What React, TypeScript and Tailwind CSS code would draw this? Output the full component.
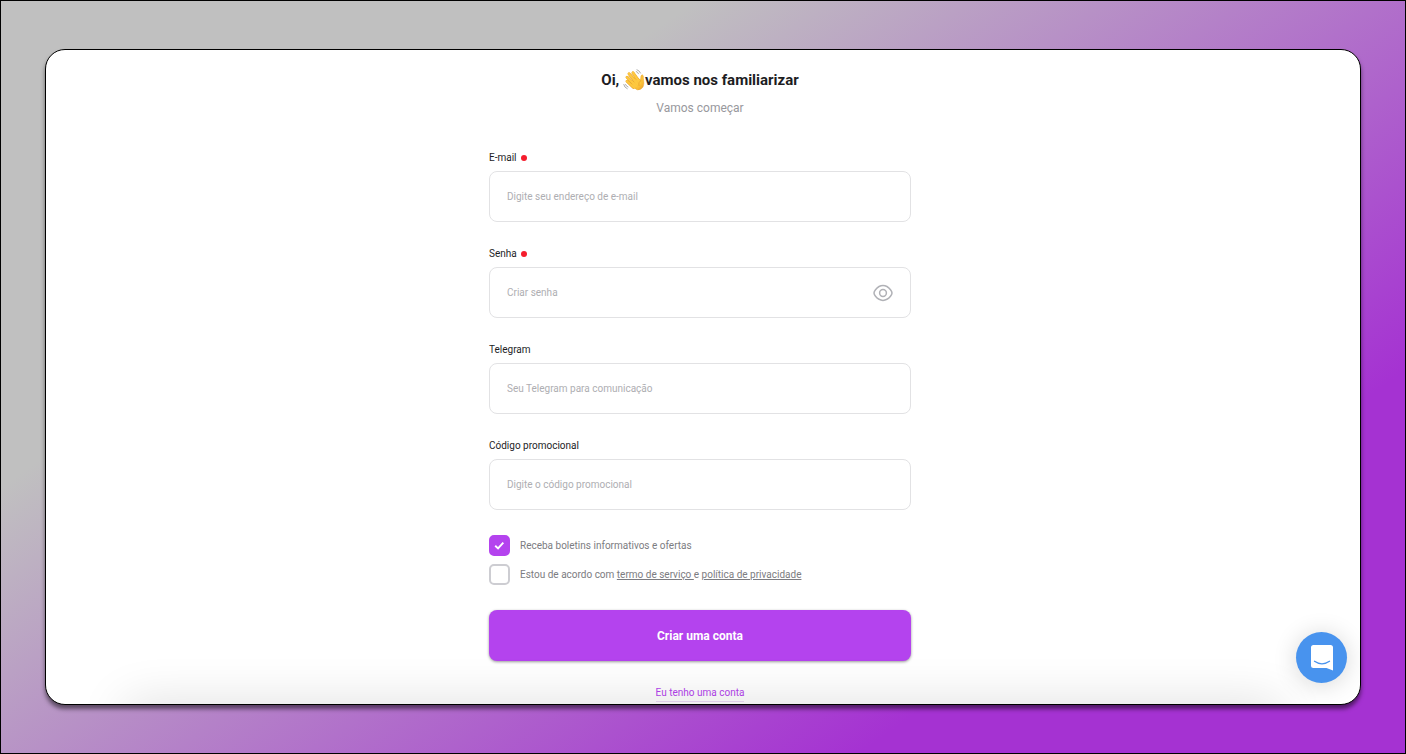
import React, { useState } from "react";

function WavingHand() {
  return (
    <svg viewBox="0 0 44 44" className="inline-block size-[22px]" aria-hidden="true">
      <defs>
        <linearGradient id="hand" x1="0" y1="0" x2="1" y2="1">
          <stop offset="0" stopColor="#ffd04a" />
          <stop offset="0.7" stopColor="#fbc037" />
          <stop offset="1" stopColor="#ec9a28" />
        </linearGradient>
      </defs>
      <g fill="none" strokeLinecap="round" strokeLinejoin="round">
        <g stroke="#e9a22c" strokeWidth="5.800">
          <path d="M8 24.500 L21 37" />
          <path d="M8 16.500 L23 31" />
          <path d="M12 9.500 L27 27" />
          <path d="M20 7.500 L32 24" />
        </g>
        <path
          d="M14 28 L23 38 Q29 44.500 36 40 Q43 35 41.500 25 Q40.500 18 40.500 13.500 Q38.500 9.500 36 13.500 L35 22 L26 16 Z"
          fill="url(#hand)"
          stroke="#e9a22c"
          strokeWidth="1"
        />
        <g stroke="#fdc83f" strokeWidth="4.600">
          <path d="M8 24.500 L22 37" />
          <path d="M8 16.500 L26 34" />
          <path d="M12 9.500 L29 30" />
          <path d="M20 7.500 L34 28" />
        </g>
        <g stroke="#dd9424" strokeWidth="1">
          <path d="M10 22.500 L18 30" />
          <path d="M11.500 14.500 L22 26" />
          <path d="M17 9.500 L26 21" />
          <path d="M36 23 Q30 26 32 33" />
        </g>
        <g stroke="#909090" strokeWidth="1.500">
          <path d="M28 1.500 Q33 3 35 8" />
          <path d="M26.500 5 Q29.500 6 31 9.500" />
          <path d="M1.500 31 Q2.500 37 8.500 39.500" />
          <path d="M5 31 Q6 34.500 10 36" />
        </g>
      </g>
    </svg>
  );
}

function EyeIcon() {
  return (
    <svg viewBox="0 0 20 20" className="size-5" fill="none" stroke="#b0b1b6" strokeWidth="1.500" aria-hidden="true">
      <path d="M1 10 C1 8.600 1.600 7.800 2.500 6.700 C4.300 4.500 6.800 2.600 10 2.600 C13.200 2.600 15.700 4.500 17.500 6.700 C18.400 7.800 19 8.600 19 10 C19 11.400 18.400 12.200 17.500 13.300 C15.700 15.500 13.200 17.400 10 17.400 C6.800 17.400 4.300 15.500 2.500 13.300 C1.600 12.200 1 11.400 1 10 Z" />
      <circle cx="10" cy="10" r="3.400" />
    </svg>
  );
}

type FieldProps = {
  id: string;
  label: string;
  placeholder: string;
  type?: string;
  required?: boolean;
  children?: React.ReactNode;
};

function Field({ id, label, placeholder, type = "text", required, children }: FieldProps) {
  return (
    <div className="flex flex-col gap-[5px]">
      <label htmlFor={id} className="flex items-center gap-1 text-[10px] leading-4 text-[#1d1d1f]">
        {label}
        {required && <span className="size-[6px] rounded-full bg-[#f51d2d]" />}
      </label>
      <div className="flex h-[51px] items-center rounded-lg border border-[#e2e2e4] bg-white px-[17px]">
        <input
          id={id}
          type={type}
          required={required}
          placeholder={placeholder}
          className="min-w-0 flex-1 bg-transparent text-[10px] leading-4 text-[#1d1d1f] outline-none placeholder:text-[#aeaeb2]"
        />
        {children}
      </div>
    </div>
  );
}

function CheckRow({ id, defaultChecked, children }: { id: string; defaultChecked?: boolean; children: React.ReactNode }) {
  return (
    <div className="flex items-center gap-2.5">
      <span className="grid size-[21px] shrink-0">
        <input
          id={id}
          type="checkbox"
          defaultChecked={defaultChecked}
          className="peer col-start-1 row-start-1 size-[21px] appearance-none rounded-[5px] border-2 border-[#cdcdd2] bg-white checked:border-[#b443ee] checked:bg-[#b443ee]"
        />
        <svg
          viewBox="0 0 22 22"
          className="pointer-events-none col-start-1 row-start-1 hidden size-[21px] peer-checked:block"
          fill="none"
          stroke="#fff"
          strokeWidth="2"
          aria-hidden="true"
        >
          <path d="M6.500 11.200 L9.500 14 L15 8" />
        </svg>
      </span>
      <label htmlFor={id} className="text-[10px] leading-4 text-[#7c7c81]">
        {children}
      </label>
    </div>
  );
}

export default function App() {
  const [visible, setVisible] = useState(false);

  return (
    <div className="flex min-h-screen flex-col border border-black bg-[linear-gradient(145deg,#c0c0c0_28%,#a532d2_78%)] px-11 py-12 font-[Roboto,sans-serif]">
      <main className="relative flex flex-1 flex-col items-center overflow-hidden rounded-[20px] border border-black bg-white pt-4 pr-1.5 shadow-[0_4px_4px_rgba(0,0,0,0.5)]">
        <h1 className="flex items-center text-[15px] leading-7 font-bold text-[#1d1d1f]">
          <span className="whitespace-pre">Oi, </span>
          <WavingHand />
          <span>vamos nos familiarizar</span>
        </h1>
        <p className="mt-1 text-[12px] leading-5 text-[#98989d]">Vamos começar</p>

        <form className="mt-8 flex w-full max-w-[422px] flex-col" onSubmit={(e) => e.preventDefault()}>
          <div className="flex flex-col gap-6">
            <Field id="email" label="E-mail" type="email" placeholder="Digite seu endereço de e-mail" required />
            <Field id="senha" label="Senha" type={visible ? "text" : "password"} placeholder="Criar senha" required>
              <button type="button" aria-label="Mostrar senha" onClick={() => setVisible(!visible)}>
                <EyeIcon />
              </button>
            </Field>
            <Field id="telegram" label="Telegram" placeholder="Seu Telegram para comunicação" />
            <Field id="promo" label="Código promocional" placeholder="Digite o código promocional" />
          </div>

          <div className="mt-[25px] flex flex-col gap-2">
            <CheckRow id="news" defaultChecked>
              Receba boletins informativos e ofertas
            </CheckRow>
            <CheckRow id="terms">
              Estou de acordo com{" "}
              <a href="#termos" className="whitespace-pre underline">
                {"termo de serviço "}
              </a>
              e{" "}
              <a href="#privacidade" className="underline">
                política de privacidade
              </a>
            </CheckRow>
          </div>

          <button
            type="submit"
            className="mt-[25px] h-[51px] rounded-lg bg-[#b443ee] text-[12px] font-bold text-white shadow-[0_1px_3px_rgba(0,0,0,0.4)]"
          >
            Criar uma conta
          </button>
        </form>

        <a href="#entrar" className="mt-6 border-b border-[#ecdcf5] text-[10px] leading-4 text-[#b443ee]">
          Eu tenho uma conta
        </a>

        <div className="pointer-events-none absolute inset-x-20 top-full h-10 shadow-[0_0_50px_rgba(0,0,0,0.14)]" />

        <button
          type="button"
          aria-label="Abrir chat"
          className="absolute right-[13px] bottom-[21px] grid size-[51px] place-items-center rounded-full bg-[#4893ee] shadow-[0_2px_24px_rgba(0,0,0,0.16)]"
        >
          <svg viewBox="0 0 24 28" className="h-7 w-6" aria-hidden="true">
            <path d="M3.500 1 H20.500 Q23 1 23 3.500 V26.500 L16.500 24 H3.500 Q1 24 1 21.500 V3.500 Q1 1 3.500 1 Z" fill="#fff" />
            <path d="M4.500 17.300 Q12 22.500 19.500 17.300" fill="none" stroke="#4893ee" strokeWidth="1.300" strokeLinecap="round" />
          </svg>
        </button>
      </main>
    </div>
  );
}
